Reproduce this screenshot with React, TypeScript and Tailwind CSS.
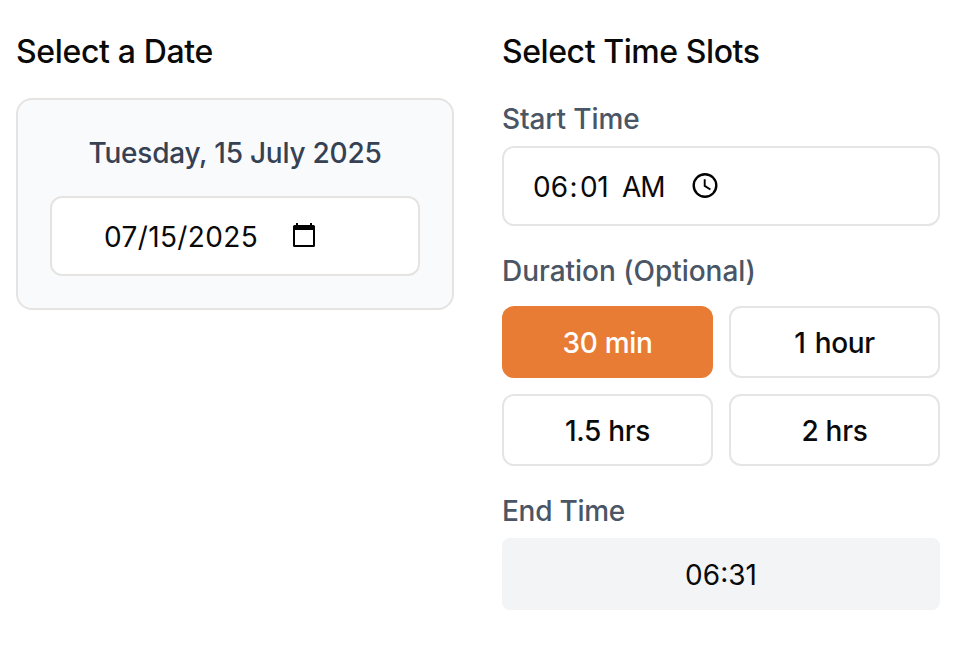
export default function App() {
  return (
    <main className="grid h-[670px] w-[966px] grid-cols-[438px_438px] content-start gap-12 bg-white px-4 pt-8 font-['Inter',sans-serif] text-neutral-950">
      <section>
        <h2 className="h-10 text-[32px] font-[450] leading-10 tracking-[-0.35px] whitespace-nowrap">Select a Date</h2>
        <div className="mt-[26px] h-[212px] rounded-2xl border-2 border-[#e5e4e3] bg-gray-50 px-8 pt-[33px]">
          <p className="h-10 text-center text-[28px] font-[450] leading-10 tracking-[-0.24px] text-gray-700 whitespace-nowrap">Tuesday, 15 July 2025</p>
          <div className="mt-[23px] flex h-20 items-center rounded-xl border-2 border-[#e5e4e3] bg-white pl-[52px] text-[28px]">
            <span className="w-[188px] pt-0.5 tracking-[0.38px] whitespace-nowrap">07/15/2025</span>
            <svg className="mb-0.5 text-black" width="24" height="26" viewBox="0 0 24 26" fill="currentColor">
              <path fillRule="evenodd" d="M4 1h2v2h12V1h2v2h1.500A1.500 1.500 0 0 1 23 4.500v19a1.500 1.500 0 0 1-1.500 1.500h-19A1.500 1.500 0 0 1 1 23.500v-19A1.500 1.500 0 0 1 2.500 3H4zM3 8v15h18V8z" />
            </svg>
          </div>
        </div>
      </section>
      <section>
        <h2 className="h-10 text-[32px] font-[450] leading-10 tracking-[-0.43px] whitespace-nowrap">Select Time Slots</h2>
        <p className="mt-[27px] h-10 text-[28px] font-[450] leading-10 tracking-[-0.1px] text-gray-600">Start Time</p>
        <div className="mt-[7px] flex h-20 items-center rounded-xl border-2 border-neutral-200 pl-[29px] text-[28px]">
          <span className="flex w-[159px] pt-0.5 whitespace-nowrap">
            <span className="w-[35px]">06</span>
            <span className="w-[11px] text-center">:</span>
            <span className="ml-px w-[32px] tracking-[-0.5px]">01</span>
            <span className="ml-[10px] tracking-[-1px]">AM</span>
          </span>
          <svg className="text-black" width="26" height="26" viewBox="0 0 26 26" fill="none" stroke="currentColor">
            <circle cx="13" cy="12.500" r="11.3" strokeWidth="2.400" />
            <path strokeWidth="1.900" d="M12.700 6.200v6.700l5.700 3.600" />
          </svg>
        </div>
        <p className="mt-[25px] h-10 text-[28px] font-[450] leading-10 tracking-[-0.03px] text-gray-600">Duration (Optional)</p>
        <div className="mt-[15px] grid grid-cols-2 gap-4 text-[28px] font-[450] tracking-[-0.3px] [word-spacing:1px]">
          <button className="h-[72px] rounded-xl bg-[#e97c35] pt-0.5 text-white">30 min</button>
          <button className="h-[72px] rounded-xl border-2 border-neutral-200 pt-0.5 [word-spacing:2px]">1 hour</button>
          <button className="h-[72px] rounded-xl border-2 border-neutral-200 pt-0.5">1.5 hrs</button>
          <button className="h-[72px] rounded-xl border-2 border-neutral-200 pt-0.5">2 hrs</button>
        </div>
        <p className="mt-[25px] h-10 text-[28px] font-[450] leading-10 tracking-[-0.28px] text-gray-600">End Time</p>
        <div className="mt-[7px] flex h-[72px] items-center justify-center rounded-lg bg-gray-100 pt-0.5 text-[28px]">06:31</div>
      </section>
    </main>
  );
}
